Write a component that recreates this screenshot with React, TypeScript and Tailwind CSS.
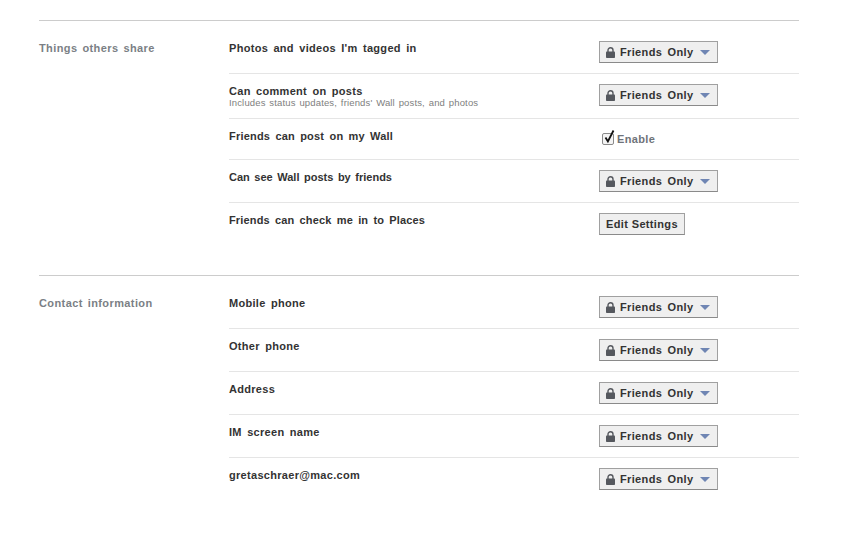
const font = "[font-family:'Liberation_Sans',Arial,sans-serif]";

function Lock() {
  return (
    <svg width="9" height="11" viewBox="0 0 9 11" className="shrink-0">
      <path d="M2 5V3.2a2.5 2.5 0 0 1 5 0V5" fill="none" stroke="#55585e" strokeWidth="1.4" />
      <rect x="0" y="4.6" width="9" height="6.4" rx="0.8" fill="#55585e" />
    </svg>
  );
}

function FriendsOnly() {
  return (
    <button className="flex h-[22px] w-[119px] items-center whitespace-nowrap border border-[#a0a0a0] border-b-[#8a8a8a] bg-[#efefef] pl-[6px] text-[11px] font-bold leading-none tracking-[0.35px] [word-spacing:2px] text-[#333333]">
      <Lock />
      <span className="ml-[5px]">Friends Only</span>
      <svg width="10" height="5" viewBox="0 0 10 5" className="ml-[7px] shrink-0">
        <path d="M0 0h10L5 5z" fill="#6f85b3" />
      </svg>
    </button>
  );
}

function EditSettings() {
  return (
    <button className="flex h-[22px] w-[86px] items-center justify-center whitespace-nowrap border border-[#a0a0a0] border-b-[#8a8a8a] bg-[#efefef] text-[11px] font-bold leading-none tracking-[0.35px] text-[#333333]">
      Edit Settings
    </button>
  );
}

function Enable() {
  return (
    <div className="ml-[3px] flex items-center pt-[14px]">
      <span className="relative block h-[12px] w-[12px] rounded-[2px] border border-[#8a8a8a] bg-[#f4f4f4]">
        <svg width="14" height="15" viewBox="0 0 14 15" className="absolute -top-[5px] left-0">
          <path d="M2.5 8.5l2.4 4L10.5 1.5" fill="none" stroke="#111111" strokeWidth="1.8" />
        </svg>
      </span>
      <span className="ml-[3px] pt-[1px] text-[11px] font-bold leading-none tracking-[0.35px] text-[#6f7379]">Enable</span>
    </div>
  );
}

function Row({ title, sub, control, h, pt, ctrlPt, last, titleTrack = "tracking-[0.3px] [word-spacing:2px]" }: { title: string; sub?: string; control: React.ReactNode; h: string; pt: string; ctrlPt: string; last?: boolean; titleTrack?: string }) {
  return (
    <div className={`flex ${h} ${last ? "" : "border-b border-[#e5e5e5]"}`}>
      <div className={`w-[370px] ${pt}`}>
        <div className={`text-[11px] font-bold leading-[14px] text-[#333333] ${titleTrack}`}>{title}</div>
        {sub && <div className="text-[9.5px] leading-[10px] tracking-[0.15px] [word-spacing:1px] text-[#808080]">{sub}</div>}
      </div>
      <div className={ctrlPt}>{control}</div>
    </div>
  );
}

function Section({ label, children, h }: { label: string; children: React.ReactNode; h: string }) {
  return (
    <section className={`flex w-[760px] border-t border-[#cccccc] ${h}`}>
      <div className="w-[190px] pt-[20px] text-[11px] font-bold leading-[14px] tracking-[0.4px] [word-spacing:1.5px] text-[#7b7f85]">{label}</div>
      <div className="w-[570px]">{children}</div>
    </section>
  );
}

export default function App() {
  return (
    <div className={`h-[535px] w-[863px] overflow-hidden bg-white px-[39px] pt-[20px] ${font}`}>
      <Section label="Things others share" h="h-[255px]">
        <Row title="Photos and videos I'm tagged in" control={<FriendsOnly />} h="h-[53px]" pt="pt-[20px]" ctrlPt="pt-[20px]" />
        <Row title="Can comment on posts" sub="Includes status updates, friends' Wall posts, and photos" control={<FriendsOnly />} h="h-[45px]" pt="pt-[10px]" ctrlPt="pt-[10px]" />
        <Row title="Friends can post on my Wall" titleTrack="tracking-[0.2px] [word-spacing:2px]" control={<Enable />} h="h-[41px]" pt="pt-[10px]" ctrlPt="" />
        <Row title="Can see Wall posts by friends" titleTrack="tracking-[0px] [word-spacing:1.5px]" control={<FriendsOnly />} h="h-[43px]" pt="pt-[10px]" ctrlPt="pt-[10px]" />
        <Row title="Friends can check me in to Places" titleTrack="tracking-[0.15px] [word-spacing:2px]" control={<EditSettings />} h="h-[43px]" pt="pt-[10px]" ctrlPt="pt-[10px]" last />
      </Section>
      <Section label="Contact information" h="h-[240px]">
        <Row title="Mobile phone" control={<FriendsOnly />} h="h-[53px]" pt="pt-[20px]" ctrlPt="pt-[20px]" />
        <Row title="Other phone" control={<FriendsOnly />} h="h-[43px]" pt="pt-[10px]" ctrlPt="pt-[10px]" />
        <Row title="Address" control={<FriendsOnly />} h="h-[43px]" pt="pt-[10px]" ctrlPt="pt-[10px]" />
        <Row title="IM screen name" control={<FriendsOnly />} h="h-[43px]" pt="pt-[10px]" ctrlPt="pt-[10px]" />
        <Row title="gretaschraer@mac.com" control={<FriendsOnly />} h="h-[43px]" pt="pt-[10px]" ctrlPt="pt-[10px]" last />
      </Section>
    </div>
  );
}
